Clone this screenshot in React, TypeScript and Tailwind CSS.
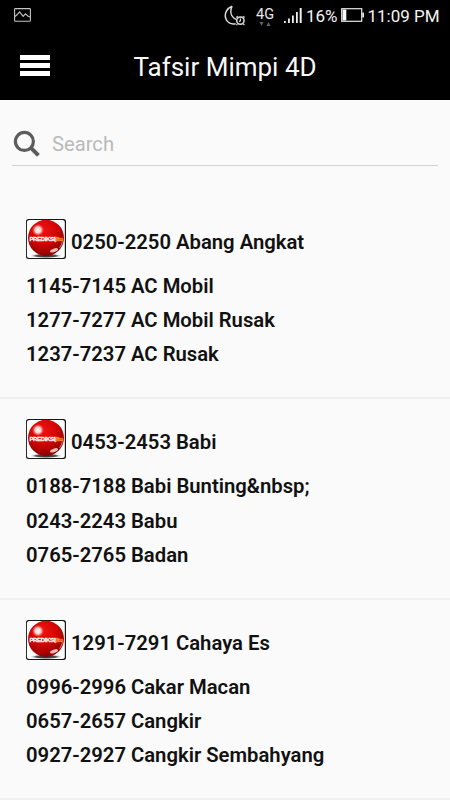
import React from "react";

interface DreamGroup {
  title: string;
  items: string[];
}

const groups: DreamGroup[] = [
  {
    title: "0250-2250 Abang Angkat",
    items: ["1145-7145 AC Mobil", "1277-7277 AC Mobil Rusak", "1237-7237 AC Rusak"],
  },
  {
    title: "0453-2453 Babi",
    items: ["0188-7188 Babi Bunting&nbsp;", "0243-2243 Babu", "0765-2765 Badan"],
  },
  {
    title: "1291-7291 Cahaya Es",
    items: ["0996-2996 Cakar Macan", "0657-2657 Cangkir", "0927-2927 Cangkir Sembahyang"],
  },
];

const StatusBar: React.FC = () => (
  <div className="flex h-8 items-center pl-[14px] pr-[10px] text-white">
    <svg className="mt-[-2px] h-[14px] w-[17px]" viewBox="0 0 17 14" fill="none" stroke="#c4c4c4">
      <rect x="0.6" y="0.6" width="15.8" height="12.6" rx="0.8" strokeWidth="1.1" />
      <path d="M1 8.5l2-1.7 2.6-2.9 3.6 4.4 2.2-2.5 2.4 2.2 2 1" strokeWidth="1.2" />
    </svg>

    <div className="ml-auto flex items-center">
      {/* Do not disturb with alarm */}
      <svg className="h-[22px] w-[22px]" viewBox="0 0 22 22" fill="none" stroke="#dedede">
        <path
          d="M8.1 1.2C2.8 3.2.4 8.4 1.6 13c1.2 4.5 5.3 6.7 10 5.7M8.1 1.2C5.8 6.2 6.6 11.5 12 14.4"
          strokeWidth="1.5"
        />
        <circle cx="16.4" cy="15.6" r="3.7" strokeWidth="1.5" />
        <path
          d="M16.4 13.5v2.3l-1.2 1M12.2 12.4l1.6-1.2M19 11.2l1.6 1.2M13.5 18.8l-1.1 1.3M19.3 18.8l1.1 1.3"
          strokeWidth="1.2"
        />
      </svg>

      <div className="ml-[9px] flex w-[20px] flex-col items-center pt-[1px]">
        <span className="text-[14.5px] leading-[15px] text-[#e8e8e8]">4G</span>
        <svg className="h-[4px] w-[12px]" viewBox="0 0 12 4" fill="#666">
          <path d="M0.5 0h4l-2 4zM7.5 4h4l-2-4z" />
        </svg>
      </div>

      <svg className="ml-[9px] mt-[-1px] h-[16px] w-[18px]" viewBox="0 0 18 16" fill="#ededed">
        <rect x="0" y="13" width="1.8" height="2" />
        <rect x="4" y="10.5" width="1.8" height="4.5" />
        <rect x="8" y="7.5" width="1.8" height="7.5" />
        <rect x="12" y="4" width="1.8" height="11" />
        <rect x="15.7" y="0" width="2" height="15" />
      </svg>

      <span className="ml-[4px] w-[33px] whitespace-nowrap text-[17px] leading-8 text-[#f4f4f4]">
        16%
      </span>

      <svg className="ml-[2px] mt-[-1px] h-[15px] w-[23px]" viewBox="0 0 23 15">
        <rect x="0.7" y="0.7" width="20" height="12.6" fill="none" stroke="#e6e6e6" strokeWidth="1.2" />
        <rect x="1.5" y="1.5" width="3.8" height="11" fill="#fff" />
        <rect x="21.2" y="4.6" width="1.8" height="4.8" fill="#e6e6e6" />
      </svg>

      <span className="ml-[3.5px] w-[72.5px] whitespace-nowrap text-[17px] leading-8 text-[#f4f4f4]">
        11:09 PM
      </span>
    </div>
  </div>
);

const Header: React.FC = () => (
  <div className="grid h-[68px] grid-cols-[50px_1fr_50px] items-center pb-[2px]">
    <button className="flex h-[21px] flex-col justify-between pl-5" aria-label="Menu">
      <span className="h-[5px] w-[30px] bg-white" />
      <span className="h-[5px] w-[30px] bg-white" />
      <span className="h-[5px] w-[30px] bg-white" />
    </button>
    <h1 className="pt-[4px] text-center text-[26px] leading-8 text-[#f8f8f8]">Tafsir Mimpi 4D</h1>
  </div>
);

const SearchBar: React.FC = () => (
  <div className="h-[99px] px-3 pt-[22px]">
    <div className="flex h-[44px] items-center border-b border-[#d2d2d2]">
      <svg
        className="ml-[1px] mt-[1px] h-[28px] w-[28px] shrink-0"
        viewBox="0 0 28 28"
        fill="none"
        stroke="#5c5c5c"
      >
        <circle cx="11.4" cy="11.4" r="9" strokeWidth="3.2" />
        <path d="M17.7 17.7l7.7 7.6" strokeWidth="4" />
      </svg>
      <input
        className="ml-[11px] min-w-0 flex-1 bg-transparent text-[20.2px] leading-6 text-gray-900 outline-none placeholder:text-[#bababa]"
        placeholder="Search"
      />
    </div>
  </div>
);

const BallLogo: React.FC = () => (
  <svg className="h-[40px] w-[40px] shrink-0" viewBox="0 0 40 40">
    <defs>
      <radialGradient id="ball" cx="0.42" cy="0.3" r="0.7">
        <stop offset="0" stopColor="#ee1210" />
        <stop offset="0.5" stopColor="#d60606" />
        <stop offset="1" stopColor="#8e0000" />
      </radialGradient>
      <radialGradient id="shine">
        <stop offset="0" stopColor="#fff" />
        <stop offset="0.5" stopColor="#ffe2df" stopOpacity="0.9" />
        <stop offset="1" stopColor="#ff4a40" stopOpacity="0" />
      </radialGradient>
      <radialGradient id="shadow">
        <stop offset="0" stopColor="#222" />
        <stop offset="0.6" stopColor="#555" />
        <stop offset="1" stopColor="#fff" stopOpacity="0" />
      </radialGradient>
      {/* White wordmark with an orange tail */}
      <linearGradient id="wordmark" gradientUnits="userSpaceOnUse" x1="3.5" y1="0" x2="36.5" y2="0">
        <stop offset="0.78" stopColor="#fff" />
        <stop offset="0.8" stopColor="#ff8f24" />
      </linearGradient>
    </defs>
    <rect width="40" height="40" rx="2.5" fill="#161616" />
    <rect x="0.9" y="0.9" width="37.9" height="38.2" rx="2.5" fill="#fff" />
    <ellipse cx="20" cy="36.8" rx="17" ry="2.4" fill="url(#shadow)" />
    <circle cx="20" cy="18.8" r="18" fill="url(#ball)" />
    <circle cx="12" cy="11" r="6.2" fill="url(#shine)" />
    <ellipse cx="28" cy="31.3" rx="4.2" ry="1.7" transform="rotate(-18 28 31.3)" fill="#ffd9d6" opacity="0.85" />
    <path d="M33.5 29a17 17 0 0 0 3-6.5" stroke="#ea8078" strokeWidth="0.9" fill="none" />
    <text
      x="3.4"
      y="21.6"
      fontFamily="Liberation Sans, sans-serif"
      fontSize="6"
      letterSpacing="-0.35"
      fill="url(#wordmark)"
      stroke="url(#wordmark)"
      strokeWidth="0.3"
    >
      PREDIKSIjitu
    </text>
  </svg>
);

const GroupCard: React.FC<{ group: DreamGroup }> = ({ group }) => (
  <section className="h-[200.4px] border-b-2 border-[#f0f0f0] px-[26px] pt-5">
    <div className="flex h-[40px] items-center gap-[5px]">
      <BallLogo />
      <h2 className="whitespace-nowrap pt-[6px]">{group.title}</h2>
    </div>
    <ul className="pt-[10px] leading-[34.2px]">
      {group.items.map((item) => (
        <li key={item}>{item}</li>
      ))}
    </ul>
  </section>
);

const App: React.FC = () => {
  return (
    <div className="h-[800px] w-[450px] overflow-hidden bg-[#fafafa] font-['Roboto',sans-serif]">
      <header className="bg-black">
        <StatusBar />
        <Header />
      </header>
      <SearchBar />
      <main className="text-[20.25px] font-semibold text-[#111]">
        {groups.map((group) => (
          <GroupCard key={group.title} group={group} />
        ))}
      </main>
    </div>
  );
};

export default App;
